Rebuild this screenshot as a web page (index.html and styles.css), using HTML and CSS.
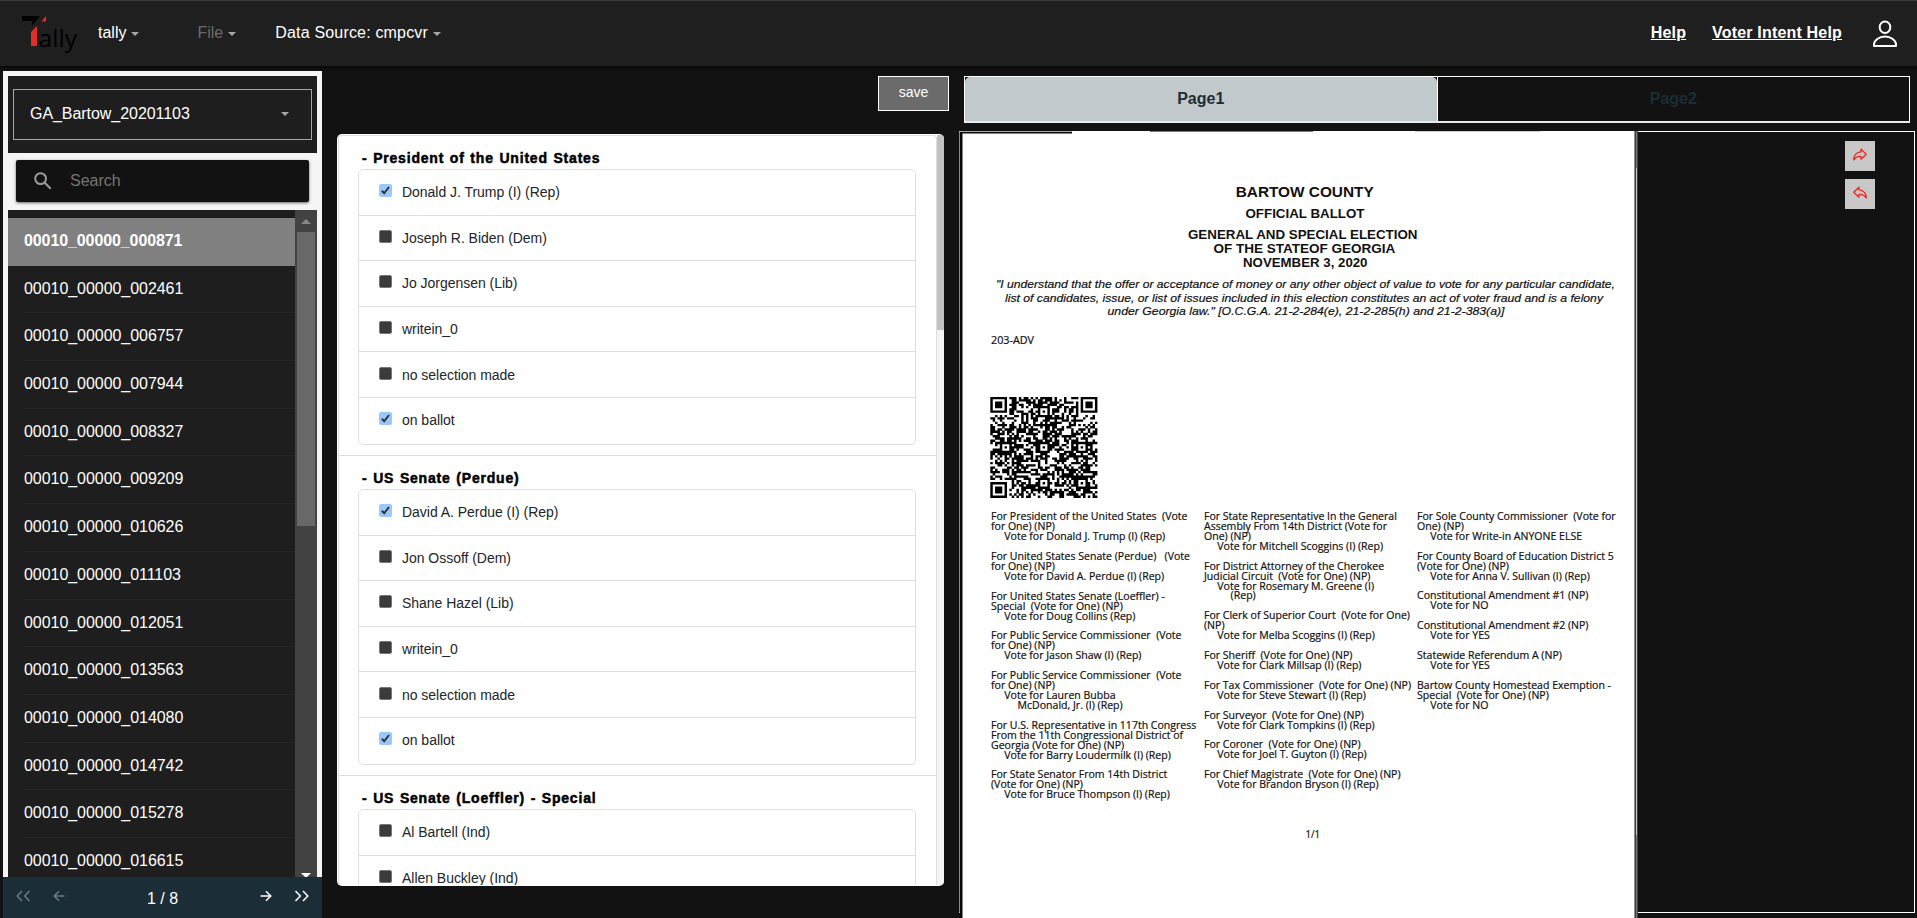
FILE: index.html
```html
<!DOCTYPE html>
<html lang="en">
<head>
<meta charset="utf-8">
<title>Tally</title>
<link rel="stylesheet" href="styles.css">
</head>
<body>
<svg class="defs" width="0" height="0">
  <symbol id="tick" viewBox="0 0 13 13"><path d="M2.800 6.800 5.200 9.300 10 3" fill="none" stroke="#333" stroke-width="2"/></symbol>
</svg>
<header class="topbar">
  <svg class="logo" width="60" height="42" viewBox="20 12 60 42">
    <path d="M22 15H40L32 25V20H22Z" fill="#000"/>
    <path d="M46 15V20.500H41.500Z" fill="#e52d27"/>
    <path d="M31 31 37 25V45H31Z" fill="#e52d27"/>
    <text x="38.500" y="45.500" class="logo-text" textLength="38.500" lengthAdjust="spacingAndGlyphs">ally</text>
  </svg>
  <div class="menu menu-tally">tally<i class="caret"></i></div>
  <div class="menu menu-file">File<i class="caret"></i></div>
  <div class="menu menu-source">Data Source: cmpcvr<i class="caret"></i></div>
  <div class="spacer"></div>
  <a class="toplink">Help</a>
  <a class="toplink">Voter Intent Help</a>
  <svg class="user" width="28" height="30" viewBox="1871 19 28 30" fill="none" stroke="#fff" stroke-width="2"><ellipse cx="1885" cy="27.300" rx="5.300" ry="5.800"/><path d="M1874 46v-1.500c0-4 5-8 11-8s11 4 11 8v1.500z" stroke-linejoin="round"/></svg>
</header>
<main class="shell">
  <aside class="side">
    <div class="picker"><div class="select"><span>GA_Bartow_20201103</span><i class="caret"></i></div></div>
    <div class="search"><svg width="18" height="18" viewBox="0 0 18 18" fill="none" stroke="#9c9c9c" stroke-width="2"><circle cx="6.600" cy="6.600" r="5.400"/><path d="M10.500 10.500 16.700 16.700"/></svg><span>Search</span></div>
    <div class="files">
      <ul class="filelist">
        <li class="active">00010_00000_000871</li><li>00010_00000_002461</li><li>00010_00000_006757</li><li>00010_00000_007944</li><li>00010_00000_008327</li><li>00010_00000_009209</li><li>00010_00000_010626</li><li>00010_00000_011103</li><li>00010_00000_012051</li><li>00010_00000_013563</li><li>00010_00000_014080</li><li>00010_00000_014742</li><li>00010_00000_015278</li><li>00010_00000_016615</li>
      </ul>
      <div class="bar"><i class="up"></i><div class="thumb"></div><i class="down"></i></div>
    </div>
    <footer class="pager">
      <svg class="off p1" width="15" height="12" viewBox="0 0 15 12"><path d="M6 1 1.200 6 6 11M13.500 1 8.700 6 13.500 11"/></svg>
      <svg class="off p2" width="12" height="12" viewBox="0 0 12 12"><path d="M11.500 6H1.500M6 1.200 1.200 6 6 10.800"/></svg>
      <span class="count">1 / 8</span>
      <svg class="p3" width="12" height="12" viewBox="0 0 12 12"><path d="M.5 6H10.500M6 1.200 10.800 6 6 10.800"/></svg>
      <svg class="p4" width="15" height="12" viewBox="0 0 15 12"><path d="M1.500 1 6.300 6 1.500 11M9 1 13.800 6 9 11"/></svg>
    </footer>
  </aside>
  <section class="contests">
    <button class="save">save</button>
    <div class="card">
      <div class="cardbody">
        <div class="contest"><h3>- President of the United States</h3>
          <ul>
            <li><b class="on"><svg><use href="#tick"/></svg></b>Donald J. Trump (I) (Rep)</li><li><b></b>Joseph R. Biden (Dem)</li><li><b></b>Jo Jorgensen (Lib)</li><li><b></b>writein_0</li><li><b></b>no selection made</li><li><b class="on"><svg><use href="#tick"/></svg></b>on ballot</li>
          </ul></div>
        <div class="contest"><h3>- US Senate (Perdue)</h3>
          <ul>
            <li><b class="on"><svg><use href="#tick"/></svg></b>David A. Perdue (I) (Rep)</li><li><b></b>Jon Ossoff (Dem)</li><li><b></b>Shane Hazel (Lib)</li><li><b></b>writein_0</li><li><b></b>no selection made</li><li><b class="on"><svg><use href="#tick"/></svg></b>on ballot</li>
          </ul></div>
        <div class="contest"><h3>- US Senate (Loeffler) - Special</h3>
          <ul>
            <li><b></b>Al Bartell (Ind)</li><li><b></b>Allen Buckley (Ind)</li><li></li>
          </ul></div>
      </div>
      <div class="cardbar"><div class="cardthumb"></div></div>
    </div>
  </section>
  <section class="view">
    <nav class="tabs"><div class="tab current"><span>Page1</span></div><div class="tab">Page2</div></nav>
    <div class="viewer">
      <svg class="ballot" width="678" height="787" viewBox="960 131 678 787">
        <rect x="960" y="131" width="678" height="787" fill="#0a0a0a"/>
        <rect x="962.500" y="133.500" width="672" height="785" fill="#fff"/>
        <rect x="1072" y="131" width="562" height="3" fill="#fff"/>
        <path d="M960 131.500H1072" stroke="#aaa"/>
        <path d="M1150 131.500H1313" stroke="#777"/>
        <path d="M1415 131.500H1540" stroke="#ccc"/>
        <path d="M1634.500 131V918" stroke="#8a8f92"/>
        <path d="M1636.500 168V835" stroke="#c9cfd2" stroke-width="1.500"/>
        <path d="M1636.500 131V168M1636.500 835V918" stroke="#777" stroke-width="2"/>
        <g class="head">
          <text x="1235.700" y="197" font-size="14.500" textLength="138">BARTOW COUNTY</text>
          <text x="1245.500" y="218" font-size="13" textLength="119">OFFICIAL BALLOT</text>
          <text x="1188" y="239" font-size="13" textLength="229.500">GENERAL AND SPECIAL ELECTION</text>
          <text x="1213.400" y="252.700" font-size="13" textLength="182">OF THE STATEOF GEORGIA</text>
          <text x="1243" y="267" font-size="13" textLength="124.500">NOVEMBER 3, 2020</text>
        </g>
        <g class="oath">
          <text x="996" y="288.300" textLength="619">"I understand that the offer or acceptance of money or any other object of value to vote for any particular candidate,</text>
          <text x="1005" y="302" textLength="598">list of candidates, issue, or list of issues included in this election constitutes an act of voter fraud and is a felony</text>
          <text x="1107.500" y="315" textLength="397">under Georgia law." [O.C.G.A. 21-2-284(e), 21-2-285(h) and 21-2-383(a)]</text>
        </g>
        <g id="qr" transform="translate(990.300 397) scale(2.378 2.240)"></g>
        <g id="votes" class="votes">
          <text x="991" y="343.700" textLength="43">203-ADV</text>
          <text x="1305.500" y="838" textLength="14.500">1/1</text>
        </g>
      </svg>
      <div class="tools">
        <button><svg width="16" height="14" viewBox="0 0 16 14"><path d="M9 1.200 14.300 6.200 9 11.200V8.400C5.500 8 3.500 9.300 1.700 12 1.500 7.500 4.500 4 9 3.900Z"/></svg></button>
        <button><svg width="16" height="14" viewBox="0 0 16 14"><path d="M7 1.200 1.700 6.200 7 11.200V8.400C10.500 8 12.500 9.300 14.300 12 14.500 7.500 11.500 4 7 3.900Z"/></svg></button>
      </div>
    </div>
  </section>
</main>
<script src="ballot.js"></script>
</body>
</html>
```
FILE: styles.css
```css
* { box-sizing: border-box; }
body { margin: 0; width: 1917px; height: 918px; overflow: hidden; background: #121212; color: #fff; font: 16px "Liberation Sans", Arial, sans-serif; display: flex; flex-direction: column; }
ul { list-style: none; margin: 0; padding: 0; }
svg { display: block; flex: none; }
.defs { position: absolute; }
.topbar { flex: none; height: 66px; background: #1f1f1f; border-top: 1px solid #3a3a3a; box-shadow: 0 2px 4px rgba(0,0,0,.6); display: flex; align-items: center; padding: 0 18px 1px 20px; }
.logo { margin-top: 1px; }
.logo-text { font: 23.500px "Open Sans", "Noto Sans", sans-serif; fill: #000; }
.menu { display: flex; align-items: center; margin-left: 34px; }
.menu.menu-tally { margin-left: 18px; }
.menu.menu-file { margin-left: 58px; color: #6a6a6a; }
.menu.menu-source { margin-left: 39px; letter-spacing: .18px; }
.caret { border: 4px solid transparent; border-top-color: #a5a5a5; border-bottom: 0; margin: 1px 0 0 5px; }
.spacer { flex: 1; }
.toplink { font-weight: bold; text-decoration: underline; margin-right: 26px; letter-spacing: .18px; }
.user { margin: 2px 0 0 3px; }
.shell { flex: 1; min-height: 0; display: flex; }
.side { flex: none; width: 319px; margin: 5px 0 0 3px; background: #f5f5f5; display: flex; flex-direction: column; padding-top: 5px; }
.picker { height: 77px; margin: 0 5px; background: #1e1e1e; padding: 13px 5px 0; }
.select { height: 51px; border: 1px solid #aca4a4; display: flex; align-items: center; justify-content: space-between; padding: 0 22px 2px 16px; letter-spacing: -.05px; }
.search { height: 42px; margin: 7px 13px 8px; background: #121212; border-radius: 2px; box-shadow: 0 1px 3px rgba(0,0,0,.6); color: #757575; display: flex; align-items: center; gap: 18px; padding-left: 18px; }
.search span { padding-bottom: 1px; }
.files { flex: 1; min-height: 0; margin: 0 5px; background: #1e1e1e; display: flex; }
.filelist { flex: 1; padding-top: 8px; overflow: hidden; }
.filelist li { height: 47.690px; padding: 14px 0 0 16px; line-height: 18px; letter-spacing: -.05px; background: linear-gradient(#252525, #252525) 16px 100% / 100% 1px no-repeat; }
.filelist .active { background: #808080; font-weight: bold; letter-spacing: -.1px; }
.bar { width: 22px; background: #424242; display: flex; flex-direction: column; align-items: center; overflow: hidden; }
.up { border: 5px solid transparent; border-top: 0; border-bottom-color: #868686; margin: 9px 0 8px; flex: none; }
.thumb { width: 18px; height: 294px; background: #686868; }
.down { border: 5px solid transparent; border-top-color: #fff; border-bottom: 0; margin-top: auto; margin-bottom: -1px; flex: none; }
.pager { flex: none; height: 41px; background: #1b2d36; display: flex; align-items: center; padding: 0 13px 3px; }
.pager svg { fill: none; stroke: #fff; stroke-width: 1.500; }
.pager .off { stroke: #6f7a80; }
.p2 { margin-left: 22px; }
.count { margin-left: 82px; padding-top: 5px; width: 32px; white-space: nowrap; }
.p3 { margin-left: 82px; }
.p4 { margin-left: 22px; }
.contests { flex: none; width: 612px; margin-left: 15px; padding-top: 10px; display: flex; flex-direction: column; align-items: flex-start; }
.save { align-self: flex-end; width: 71px; height: 35px; border: 1px solid #fff; background: #6b6b6b; color: #fff; font: 14px "Liberation Sans", Arial, sans-serif; padding: 0 0 4px; margin-bottom: 23px; }
.card { width: 607px; height: 752px; background: #fff; border-radius: 5px; overflow: hidden; display: flex; padding: 1px 0 1px 1px; }
.cardbody { flex: 1; border: 1px solid #dfdfdf; border-bottom: 0; border-radius: 4px 4px 0 0; overflow: hidden; }
.cardbar { width: 7px; background: #f5f5f5; }
.cardthumb { height: 195px; background: #c1c1c1; }
.contest { height: 320px; border-bottom: 1px solid #dfdfdf; padding: 13px 20px 0 19px; }
.contest h3 { margin: 0 0 0 4px; height: 20px; line-height: 18px; font-size: 14px; color: #000; letter-spacing: .8px; word-spacing: 1px; -webkit-text-stroke: .5px #000; white-space: nowrap; }
.contest ul { border: 1px solid #dfdfdf; border-radius: 5px; width: 558px; }
.contest li { height: 45.600px; border-bottom: 1px solid #dfdfdf; display: flex; align-items: center; padding-left: 20px; font-size: 14px; color: #212529; letter-spacing: -.03px; }
.contest li:last-child { border: 0; padding-bottom: 1px; }
.contest b { width: 13px; height: 13px; border: 1px solid #767676; border-radius: 2px; background: #3b3b3b; margin: 0 10px 3px 0; }
.contest b.on { background: #99c8ff; border: 0; }
.contest b svg { width: 13px; height: 13px; }
.view { flex: none; margin-left: 10px; width: 957px; padding-top: 10px; }
.tabs { display: flex; margin: 0 6px 8px 5px; width: 946px; height: 47px; border: 1px solid #fff; border-bottom: 2px solid #e8ebed; }
.tab { flex: 1; display: flex; align-items: center; justify-content: center; font-weight: bold; color: #1b2d36; padding-bottom: 1px; }
.tab.current { background: #c2c9cc; border-radius: 5px 5px 0 0; }
.tab + .tab { border-left: 1px solid #fff; }
.viewer { position: relative; height: 782px; width: 956px; border: 1px solid #fff; border-left-color: #888; }
.ballot { margin-top: -1px; }
.ballot text { white-space: pre; }
.head text, .oath text, .votes text { fill: #111; }
.head text { font-family: "Liberation Sans", Arial, sans-serif; font-weight: bold; }
.oath text { font: italic 11.500px "Liberation Sans", Arial, sans-serif; stroke: #111; stroke-width: .2px; }
.votes text { font: 10px "Open Sans", "Noto Sans", sans-serif; stroke: #111; stroke-width: .2px; }
.tools { position: absolute; left: 885px; top: 9px; display: grid; gap: 8px; }
.tools button { width: 30px; height: 30px; border: 0; padding: 0 0 3px; background: #c8c8c8; display: flex; align-items: center; justify-content: center; }
.tools svg { fill: none; stroke: #f01c1c; stroke-width: 1.200; stroke-linejoin: round; }
```
FILE: ballot.js
```js
const NS = 'http://www.w3.org/2000/svg';

// Printed selections: one entry per line, leading ">" marks an indent level.
const columns = [
  [991, 520.3, [
    'For President of the United States  (Vote', 'for One) (NP)', '>Vote for Donald J. Trump (I) (Rep)', '',
    'For United States Senate (Perdue)   (Vote', 'for One) (NP)', '>Vote for David A. Perdue (I) (Rep)', '',
    'For United States Senate (Loeffler) -', 'Special  (Vote for One) (NP)', '>Vote for Doug Collins (Rep)', '',
    'For Public Service Commissioner  (Vote', 'for One) (NP)', '>Vote for Jason Shaw (I) (Rep)', '',
    'For Public Service Commissioner  (Vote', 'for One) (NP)', '>Vote for Lauren Bubba', '>>McDonald, Jr. (I) (Rep)', '',
    'For U.S. Representative in 117th Congress', 'From the 11th Congressional District of', 'Georgia (Vote for One) (NP)', '>Vote for Barry Loudermilk (I) (Rep)', '',
    'For State Senator From 14th District', '(Vote for One) (NP)', '>Vote for Bruce Thompson (I) (Rep)']],
  [1204, 520, [
    'For State Representative In the General', 'Assembly From 14th District (Vote for', 'One) (NP)', '>Vote for Mitchell Scoggins (I) (Rep)', '',
    'For District Attorney of the Cherokee', 'Judicial Circuit  (Vote for One) (NP)', '>Vote for Rosemary M. Greene (I)', '>>(Rep)', '',
    'For Clerk of Superior Court  (Vote for One)', '(NP)', '>Vote for Melba Scoggins (I) (Rep)', '',
    'For Sheriff  (Vote for One) (NP)', '>Vote for Clark Millsap (I) (Rep)', '',
    'For Tax Commissioner  (Vote for One) (NP)', '>Vote for Steve Stewart (I) (Rep)', '',
    'For Surveyor  (Vote for One) (NP)', '>Vote for Clark Tompkins (I) (Rep)', '',
    'For Coroner  (Vote for One) (NP)', '>Vote for Joel T. Guyton (I) (Rep)', '',
    'For Chief Magistrate  (Vote for One) (NP)', '>Vote for Brandon Bryson (I) (Rep)']],
  [1417, 520, [
    'For Sole County Commissioner  (Vote for', 'One) (NP)', '>Vote for Write-in ANYONE ELSE', '',
    'For County Board of Education District 5', '(Vote for One) (NP)', '>Vote for Anna V. Sullivan (I) (Rep)', '',
    'Constitutional Amendment #1 (NP)', '>Vote for NO', '', 'Constitutional Amendment #2 (NP)', '>Vote for YES', '',
    'Statewide Referendum A (NP)', '>Vote for YES', '',
    'Bartow County Homestead Exemption -', 'Special  (Vote for One) (NP)', '>Vote for NO']]
];
const votes = document.getElementById('votes');
const STRETCH = 1.055;
for (const [x, y, lines] of columns) {
  lines.forEach((line, i) => {
    if (!line) return;
    const depth = line.match(/^>*/)[0].length;
    const t = document.createElementNS(NS, 'text');
    t.setAttribute('transform', `translate(${x + depth * 13.3} ${y + i * 9.93}) scale(${STRETCH} 1)`);
    t.textContent = line.slice(depth);
    votes.appendChild(t);
  });
}
for (const t of document.querySelectorAll('.ballot text[textLength]')) t.setAttribute('lengthAdjust', 'spacingAndGlyphs');

// 45x45 code: finder squares, alignment squares, then data modules.
const N = 45;
let seed = 20201103, d = '';
const rand = () => (seed = (seed * 1103515245 + 12345) % 2147483648) / 2147483648;
const ring = (dx, dy) => Math.max(Math.abs(dx), Math.abs(dy));
for (let y = 0; y < N; y++) for (let x = 0; x < N; x++) {
  let on = rand() < 0.57;
  for (const [cx, cy] of [[22, 6], [6, 22], [22, 22], [38, 22], [22, 38], [38, 38]]) {
    const r = ring(x - cx, y - cy);
    if (r <= 2) on = r !== 1;
  }
  for (const [cx, cy] of [[3, 3], [41, 3], [3, 41]]) {
    const r = ring(x - cx, y - cy);
    if (r <= 4) on = r !== 2 && r !== 4;
  }
  if (on) d += `M${x} ${y}h1.04v1.04h-1.04z`;
}
const p = document.createElementNS(NS, 'path');
p.setAttribute('d', d);
document.getElementById('qr').appendChild(p);
```
